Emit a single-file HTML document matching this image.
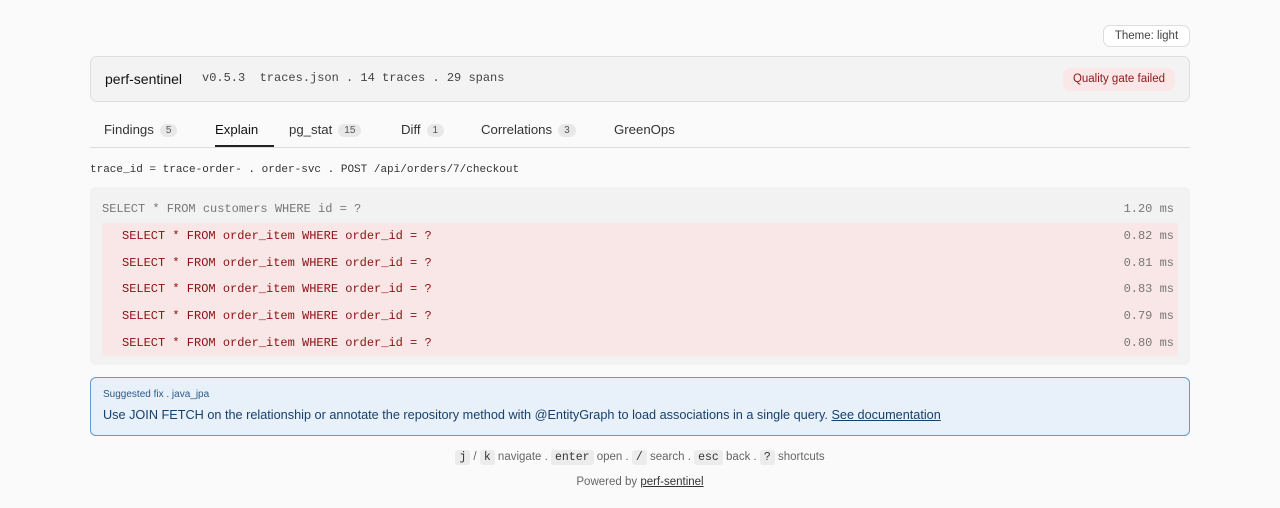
<!DOCTYPE html>
<html><head><style>
*{box-sizing:border-box;margin:0;padding:0}
body{width:1280px;height:508px;background:#fafafa;font-family:"Liberation Sans",sans-serif;color:#222;position:relative;overflow:hidden}
.mono{font-family:"Liberation Mono",monospace}
.abs{position:absolute}
.theme{left:1103px;top:25px;width:87px;height:22px;border:1px solid #ddd;border-radius:7px;background:#fff;font-size:11.5px;color:#444;text-align:center;line-height:20px}
.hdr{left:90px;top:56px;width:1100px;height:46px;border:1px solid #ddd;border-radius:7px;background:#f3f3f3}
.tabs{left:90px;top:118px;width:1100px;height:30px;border-bottom:1px solid #ddd}
.tab{position:absolute;top:4px;font-size:13.2px;color:#333}
.badge{display:inline-block;background:#e8e8e8;border-radius:8px;font-size:10px;color:#555;padding:1px 6px;margin-left:6px;vertical-align:1px}
.box{left:90px;top:187px;width:1100px;height:178px;background:#f2f2f2;border-radius:6px}
.row{position:absolute;left:12px;width:1076px;height:26.7px;line-height:26.7px;font-size:12px;font-family:"Liberation Mono",monospace}
.red{background:#f9e6e6;color:#8a1111}
.red span.q{padding-left:20px}
.ms{position:absolute;right:4px;color:#777}
.fix{left:90px;top:377px;width:1100px;height:59px;border:1px solid #5f9ad6;border-radius:6px;background:#e8f0fa}
kbd{font-family:"Liberation Mono",monospace;background:#ececec;border-radius:3px;padding:1px 4px;font-size:11.5px;color:#333}
</style></head><body>
<div class="abs theme">Theme: light</div>
<div class="abs hdr">
 <span class="abs" style="left:14px;top:14px;font-size:14px;color:#111">perf-sentinel</span>
 <span class="abs mono" style="left:111px;top:14px;font-size:12px;color:#444">v0.5.3&nbsp; traces.json . 14 traces . 29 spans</span>
 <span class="abs" style="right:14px;top:11px;height:23px;line-height:23px;padding:0 10px;background:#fbe7e7;color:#8a1a1a;border-radius:8px;font-size:11.5px">Quality gate failed</span>
</div>
<div class="abs tabs">
 <span class="tab" style="left:14px">Findings<span class="badge">5</span></span>
 <span class="tab" style="left:125px;color:#111">Explain</span>
 <div class="abs" style="left:125px;top:27px;width:59px;height:2px;background:#222"></div>
 <span class="tab" style="left:199px">pg_stat<span class="badge">15</span></span>
 <span class="tab" style="left:311px">Diff<span class="badge">1</span></span>
 <span class="tab" style="left:391px">Correlations<span class="badge">3</span></span>
 <span class="tab" style="left:524px">GreenOps</span>
</div>
<div class="abs mono" style="left:90px;top:164px;font-size:11px;color:#333">trace_id = trace-order- . order-svc . POST /api/orders/7/checkout</div>
<div class="abs box">
 <div class="row" style="top:9px;color:#777;left:12px">SELECT * FROM customers WHERE id = ?<span class="ms">1.20 ms</span></div>
 <div class="row red" style="top:36px"><span class="q">SELECT * FROM order_item WHERE order_id = ?</span><span class="ms">0.82 ms</span></div>
 <div class="row red" style="top:62.7px"><span class="q">SELECT * FROM order_item WHERE order_id = ?</span><span class="ms">0.81 ms</span></div>
 <div class="row red" style="top:89.4px"><span class="q">SELECT * FROM order_item WHERE order_id = ?</span><span class="ms">0.83 ms</span></div>
 <div class="row red" style="top:116.1px"><span class="q">SELECT * FROM order_item WHERE order_id = ?</span><span class="ms">0.79 ms</span></div>
 <div class="row red" style="top:142.8px"><span class="q">SELECT * FROM order_item WHERE order_id = ?</span><span class="ms">0.80 ms</span></div>
</div>
<div class="abs fix">
 <div class="abs" style="left:12px;top:11px;font-size:10px;color:#2a5a8a">Suggested fix . java_jpa</div>
 <div class="abs" style="left:12px;top:30px;font-size:12.7px;color:#17406b">Use JOIN FETCH on the relationship or annotate the repository method with @EntityGraph to load associations in a single query. <u>See documentation</u></div>
</div>
<div class="abs" style="left:0;width:1280px;top:451px;text-align:center;font-size:11.5px;color:#666"><kbd>j</kbd> / <kbd>k</kbd> navigate . <kbd>enter</kbd> open . <kbd>/</kbd> search . <kbd>esc</kbd> back . <kbd>?</kbd> shortcuts</div>
<div class="abs" style="left:0;width:1280px;top:476px;text-align:center;font-size:11.5px;color:#666">Powered by <u style="color:#333">perf-sentinel</u></div>
</body></html>
